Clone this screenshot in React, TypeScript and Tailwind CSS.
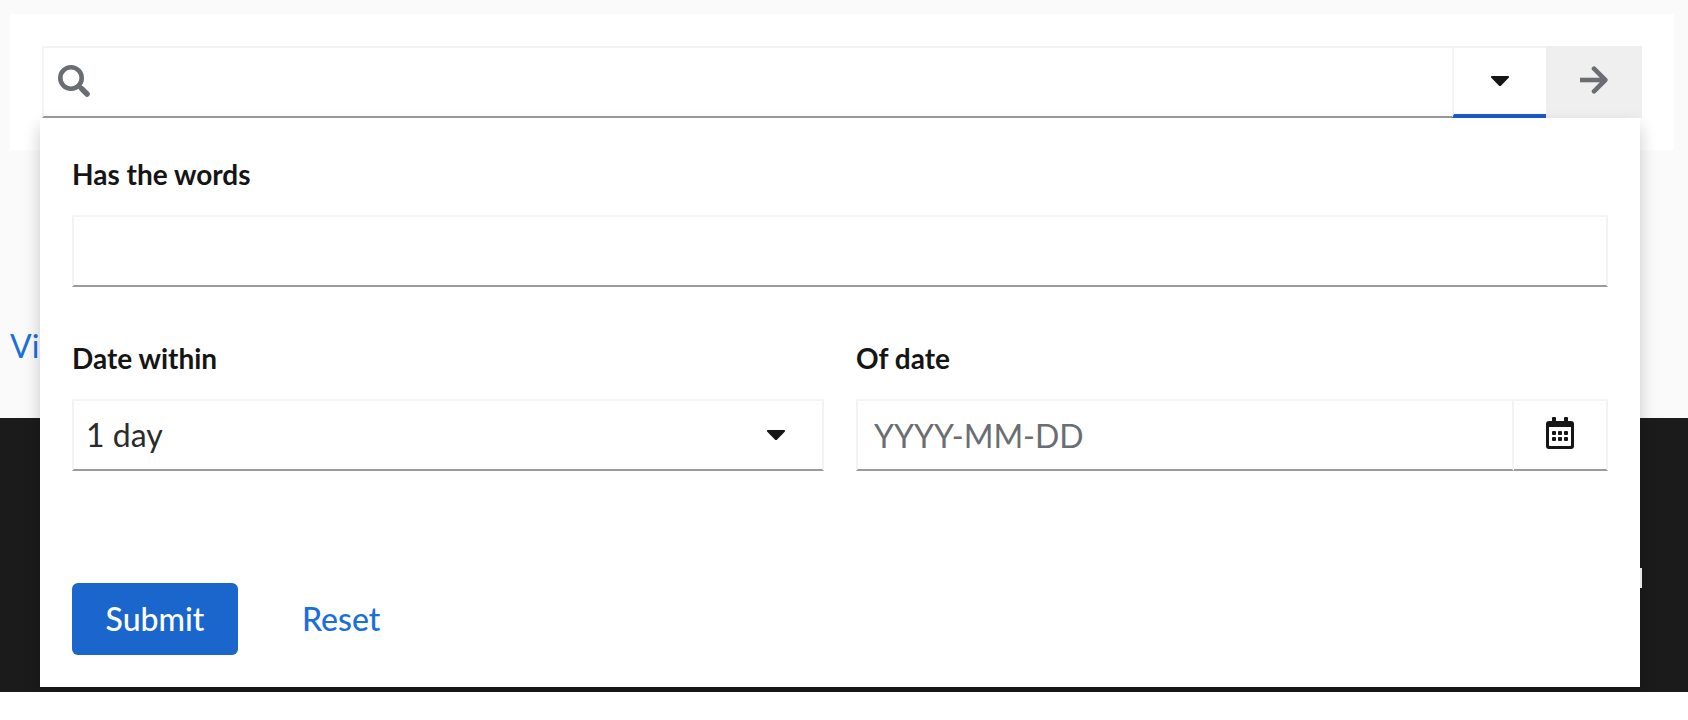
import { useState } from "react";

function SearchIcon() {
  return (
    <svg viewBox="0 0 32 32" className="size-8" fill="none" stroke="currentColor" aria-hidden="true">
      <circle cx="13" cy="13" r="10.700" strokeWidth="4.600" />
      <path d="M21.500 21.500 24 24" strokeWidth="4.500" />
      <path d="M24 24 29 29" strokeWidth="5.500" strokeLinecap="round" />
    </svg>
  );
}

function Caret() {
  return (
    <svg viewBox="0 0 18 10" className="h-[10px] w-[18px]" fill="currentColor" aria-hidden="true">
      <path d="M1 0h16c.9 0 1.300 1 .7 1.700L10.200 9.400c-.7.700-1.700.700-2.400 0L.3 1.700C-.3 1 .1 0 1 0z" />
    </svg>
  );
}

function ArrowRight() {
  return (
    <svg viewBox="0 0 28 28" className="size-7" fill="none" stroke="currentColor" strokeWidth="4.600" aria-hidden="true">
      <path d="M0 14h25" />
      <path d="M14 2.700 25.300 14 14 25.300" strokeLinecap="round" strokeLinejoin="round" />
    </svg>
  );
}

function Calendar() {
  return (
    <svg viewBox="0 0 28 32" className="h-8 w-7" fill="currentColor" aria-hidden="true">
      <path
        fillRule="evenodd"
        d="M6 1a1 1 0 0 1 1-1h2a1 1 0 0 1 1 1v3h8V1a1 1 0 0 1 1-1h2a1 1 0 0 1 1 1v3h3a3 3 0 0 1 3 3v22a3 3 0 0 1-3 3H3a3 3 0 0 1-3-3V7a3 3 0 0 1 3-3h3zM3 10v18.200q0 .8.800.8h20.400q.8 0 .8-.8V10z"
      />
      <g>
        <rect x="6" y="14" width="4" height="4" rx="1" />
        <rect x="12" y="14" width="4" height="4" rx="1" />
        <rect x="18" y="14" width="4" height="4" rx="1" />
        <rect x="6" y="20" width="4" height="4" rx="1" />
        <rect x="12" y="20" width="4" height="4" rx="1" />
        <rect x="18" y="20" width="4" height="4" rx="1" />
      </g>
    </svg>
  );
}

const field = "h-[72px] w-full border-2 border-[#f3f3f3] border-b-[#999b9f] bg-white text-[32px] text-[#2b2b2b] outline-none";
const label = "block text-[28px] leading-[42px] font-bold text-[#151515]";

export default function App() {
  const [words, setWords] = useState("");
  const [date, setDate] = useState("");

  return (
    <div className="bg-white pb-7 font-['Lato',sans-serif]">
      <div className="relative overflow-hidden">
        <main className="flex h-[418px] flex-col items-start bg-[#fafafa] pt-[14px] pr-[14px] pl-[10px]">
          <div className="w-full bg-white p-8">
            <div className="flex h-[72px]">
              <label className="flex min-w-0 flex-1 items-center border-2 border-r-0 border-[#f3f3f3] border-b-[#999b9f] pb-[2px] pl-[14px] text-[#6a6e73]">
                <SearchIcon />
                <input type="search" aria-label="Search" className="h-full min-w-0 flex-1 px-4 text-[32px] outline-none" />
              </label>
              <button
                type="button"
                aria-label="Advanced search"
                className="flex w-[94px] items-center justify-center border-2 border-r-0 border-b-4 border-[#f3f3f3] border-b-[#1a5bc4] text-[#151515]"
              >
                <Caret />
              </button>
              <button type="button" aria-label="Go" className="flex w-24 items-center justify-center bg-[#efefef] pb-1 text-[#6a6e73]">
                <ArrowRight />
              </button>
            </div>
          </div>
          <a href="#view" className="mt-[172px] text-[32px] leading-[48px] text-[#1a6fd8]">
            Vi
          </a>
        </main>
        <footer className="flex h-[274px] justify-end bg-[#1b1b1b] pt-[150px] pr-[46px]">
          <span className="h-5 w-2 bg-white" />
        </footer>

        <form
          onSubmit={(e) => e.preventDefault()}
          onReset={() => {
            setWords("");
            setDate("");
          }}
          className="absolute top-[118px] right-12 left-10 bg-white px-8 pt-[35px] pb-8 shadow-[0_8px_16px_rgba(0,0,0,0.2)]"
        >
          <label htmlFor="words" className={label}>
            Has the words
          </label>
          <input id="words" value={words} onChange={(e) => setWords(e.target.value)} className={`mt-5 px-4 ${field}`} />

          <div className="mt-[50px] grid grid-cols-2 gap-8">
            <div>
              <label htmlFor="within" className={label}>
                Date within
              </label>
              <div className="relative mt-5">
                <select id="within" className={`appearance-none px-3 ${field}`}>
                  <option>1 day</option>
                  <option>3 days</option>
                  <option>1 week</option>
                </select>
                <span className="pointer-events-none absolute inset-y-0 right-[39px] flex items-center text-[#151515]">
                  <Caret />
                </span>
              </div>
            </div>
            <div>
              <label htmlFor="date" className={label}>
                Of date
              </label>
              <div className="mt-5 flex">
                <input
                  id="date"
                  placeholder="YYYY-MM-DD"
                  value={date}
                  onChange={(e) => setDate(e.target.value)}
                  className={`min-w-0 flex-1 px-4 placeholder:text-[#6a6e73] ${field}`}
                />
                <button
                  type="button"
                  aria-label="Pick a date"
                  className="flex h-[72px] w-[94px] items-center justify-center border-2 border-l-0 border-[#f3f3f3] border-b-[#999b9f] pb-1 text-[#151515]"
                >
                  <Calendar />
                </button>
              </div>
            </div>
          </div>

          <div className="mt-28 flex gap-8">
            <button type="submit" className="h-[72px] min-w-[166px] rounded-md bg-[#1a66cc] px-8 text-[32px] font-medium text-white">
              Submit
            </button>
            <button type="reset" className="h-[72px] px-8 text-[32px] font-medium text-[#1a6fd8]">
              Reset
            </button>
          </div>
        </form>
      </div>
    </div>
  );
}
